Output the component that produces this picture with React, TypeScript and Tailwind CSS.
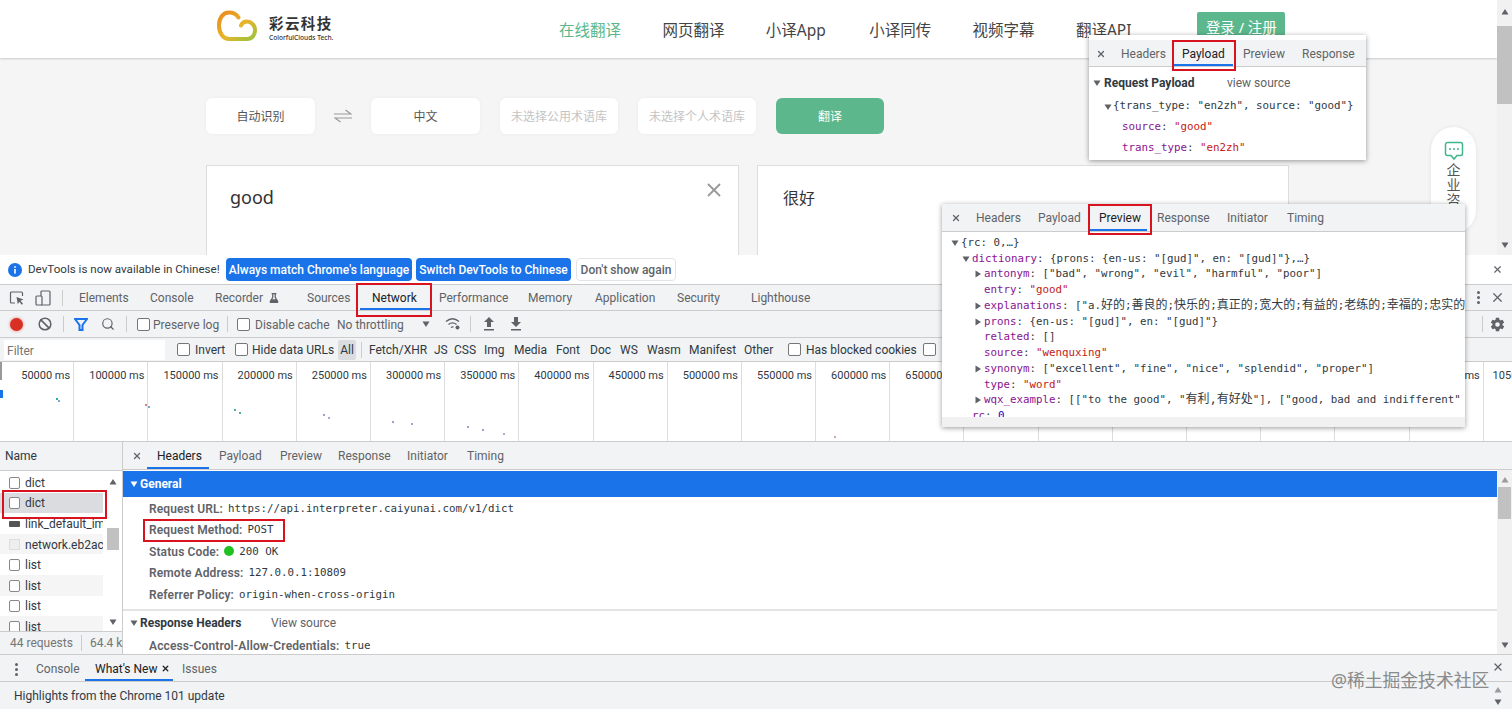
import { Ban, Search, X } from "lucide-react";
import { FaFlask } from "react-icons/fa";
import { IoSettingsSharp } from "react-icons/io5";

const cjk = "font-['Noto_Sans','Noto_Sans_CJK_SC',sans-serif]";
const ui = "font-['Roboto','Noto_Sans_CJK_SC',sans-serif]";
const mono = "font-['DejaVu_Sans_Mono','Noto_Sans_CJK_SC',monospace] text-[10.8px]";

const navItems = ["在线翻译", "网页翻译", "小译App", "小译同传", "视频字幕", "翻译API"];

const mainTabs = [
  { label: "Elements", w: "w-[71px]" },
  { label: "Console", w: "w-[65px]" },
  { label: "Recorder", w: "w-[92px]", flask: true },
  { label: "Sources", w: "w-[65px]" },
  { label: "Network", w: "w-[67px]", active: true },
  { label: "Performance", w: "w-[89px]" },
  { label: "Memory", w: "w-[67px]" },
  { label: "Application", w: "w-[82px]" },
  { label: "Security", w: "w-[74px]" },
  { label: "Lighthouse", w: "w-[80px]" },
];

const filterTypes = [
  { label: "Fetch/XHR", w: "w-[65px]" },
  { label: "JS", w: "w-[20px]" },
  { label: "CSS", w: "w-[30px]" },
  { label: "Img", w: "w-[30px]" },
  { label: "Media", w: "w-[42px]" },
  { label: "Font", w: "w-[34px]" },
  { label: "Doc", w: "w-[30px]" },
  { label: "WS", w: "w-[27px]" },
  { label: "Wasm", w: "w-[42px]" },
  { label: "Manifest", w: "w-[55px]" },
  { label: "Other", w: "w-[44px]" },
];

const ticks = [
  "50000 ms", "100000 ms", "150000 ms", "200000 ms", "250000 ms", "300000 ms", "350000 ms",
  "400000 ms", "450000 ms", "500000 ms", "550000 ms", "600000 ms", "650000 ms", "700000 ms",
  "750000 ms", "800000 ms", "850000 ms", "900000 ms", "950000 ms", "1000000 ms", "1050000 ms",
];

const dots = [
  [56, 398, "#3aa"], [58, 400, "#7ac"], [145, 404, "#c88"], [148, 406, "#7ac"], [234, 409, "#5aa"], [239, 412, "#5a9"],
  [323, 414, "#a9c"], [328, 417, "#aac"], [392, 421, "#a9c"], [411, 423, "#a9c"], [467, 426, "#a9c"], [482, 429, "#a9c"],
  [503, 433, "#bac"], [834, 436, "#caa"],
];

const requests = [
  { name: "dict" },
  { name: "dict", selected: true },
  { name: "link_default_im.", kind: "image" },
  { name: "network.eb2acc", kind: "file" },
  { name: "list" },
  { name: "list" },
  { name: "list" },
  { name: "list" },
];

const Checkbox = () => <span className="block w-[13px] h-[13px] shrink-0 border border-[#767676] rounded-[2px] bg-white" />;

const Sep = () => <span className="block w-px h-[16px] bg-[#ccc] shrink-0" />;

const Caret = ({ right = false, className = "" }: { right?: boolean; className?: string }) => (
  <svg width="8" height="8" viewBox="0 0 8 8" className={`shrink-0 ${className}`}>
    {right ? <path d="M1.5 0.5 7 4 1.5 7.5z" fill="#5f6368" /> : <path d="M0.5 1.5h7L4 7z" fill="#5f6368" />}
  </svg>
);

const RedBox = ({ className }: { className: string }) => <div className={`absolute border-2 border-[#d8121f] pointer-events-none ${className}`} />;

const Pill = ({ children }: { children: React.ReactNode }) => (
  <div className="w-[109px] h-[36px] rounded-[6px] bg-white flex items-center justify-center pt-[1px] text-[12px] text-[#555] shadow-[0_0_4px_rgba(0,0,0,0.04)]">{children}</div>
);

const Ghost = ({ children }: { children: React.ReactNode }) => (
  <div className="w-[118px] h-[36px] rounded-[6px] bg-white flex items-center justify-center pt-[1px] text-[12px] text-[#c4c4c4] shadow-[0_0_4px_rgba(0,0,0,0.04)]">{children}</div>
);

const Logo = () => (
  <svg width="44" height="34" viewBox="0 0 44 34" className="shrink-0">
    <defs>
      <linearGradient id="cloud" x1="0" y1="0" x2="1" y2="1">
        <stop offset="0" stopColor="#ea8a1e" />
        <stop offset="0.55" stopColor="#e6b52a" />
        <stop offset="1" stopColor="#9cc23c" />
      </linearGradient>
    </defs>
    <path
      d="M22.5 7.5C20 3.5 16.5 2.5 13 2.5 7 2.5 3 8 3 15.5 3 24 8 29 13 29H31C36 29 39 25 39 20.5 39 15 35 11.5 31 11.5 28 11.5 26 13 25 15.5"
      fill="none"
      stroke="url(#cloud)"
      strokeWidth="4"
      strokeLinecap="round"
    />
  </svg>
);

const DetailTabs = ({ items, active }: { items: { label: string; w: string }[]; active: string }) => (
  <>
    {items.map((t) => (
      <div key={t.label} className={`${t.w} h-full shrink-0 flex items-center relative text-[12px] ${t.label === active ? "text-[#202124]" : "text-[#5f6368]"}`}>
        {t.label}
        {t.label === active && <span className="absolute left-[-10px] right-[10px] bottom-0 h-[2px] bg-[#1a73e8]" />}
      </div>
    ))}
  </>
);

const Row = ({ label, children }: { label: string; children: React.ReactNode }) => (
  <div className="flex items-center h-[21.5px] pl-[26px] gap-[5px] whitespace-nowrap">
    <span className="text-[12px] font-semibold tracking-[0.12px] text-[#5f6368]">{label}</span>
    <span className={`${mono} text-[#303942]`}>{children}</span>
  </div>
);

const K = ({ children }: { children: React.ReactNode }) => <span className="text-[#881391]">{children}</span>;
const S = ({ children }: { children: React.ReactNode }) => <span className="text-[#c41a16]">{children}</span>;
const Zh = ({ children }: { children: React.ReactNode }) => <span className="text-[12px] leading-none">{children}</span>;

const Line = ({ pad, open, closed, children }: { pad: string; open?: boolean; closed?: boolean; children: React.ReactNode }) => (
  <div className={`flex items-center h-[15.75px] whitespace-nowrap ${pad}`}>
    <span className="w-[10px] shrink-0">{open ? <Caret /> : closed ? <Caret right /> : null}</span>
    <span>{children}</span>
  </div>
);

export default function App() {
  return (
    <div className={`relative w-[1512px] h-[709px] overflow-hidden bg-white ${ui}`}>
      {/* translated page */}
      <div className={`h-[255px] flex overflow-hidden bg-[#f5f5f5] ${cjk}`}>
        <div className="flex-1 min-w-0">
          <div className="h-[58px] bg-white shadow-[0_1px_2px_rgba(0,0,0,0.18)] flex pl-[216px]">
            <div className="flex items-start pt-[10px] gap-[7px] w-[343px]">
              <Logo />
              <div className="pl-[2px] pt-[4px]">
                <div className="text-[14.5px] leading-[18px] font-bold tracking-[1.4px] text-[#333]">彩云科技</div>
                <div className="text-[6.6px] leading-[10px] mt-[1px] font-medium text-[#333]">ColorfulClouds Tech.</div>
              </div>
            </div>
            {navItems.map((n, i) => (
              <div key={n} className={`w-[103.4px] h-full flex items-center pt-[3px] text-[15.5px] ${i === 0 ? "text-[#5cb88c]" : "text-[#444]"}`}>
                {n}
              </div>
            ))}
            <div className="ml-[18px] mt-[12px] w-[88px] h-[36px] rounded-[2px] bg-[#5cb88c] text-white text-[14.5px] text-center pt-[5px]">登录 / 注册</div>
          </div>
          <div className="pl-[206px] pt-[40px] flex items-center">
            <Pill>自动识别</Pill>
            <svg width="18" height="14" viewBox="0 0 18 14" className="mx-[19px] shrink-0" fill="none" stroke="#999" strokeWidth="1.2">
              <path d="M0 5H17L11.5 1" />
              <path d="M18 9H1L6.5 13" />
            </svg>
            <Pill>中文</Pill>
            <div className="ml-[20px] flex gap-[20px]">
              <Ghost>未选择公用术语库</Ghost>
              <Ghost>未选择个人术语库</Ghost>
              <div className="w-[108px] h-[36px] rounded-[6px] bg-[#5cb88c] text-white text-[12px] flex items-center justify-center pt-[1px]">翻译</div>
            </div>
          </div>
          <div className="pl-[206px] pt-[31px] flex gap-[18px]">
            <div className="relative w-[533px] h-[200px] bg-white border border-[#ddd] pl-[23px] pt-[18px] text-[18px] text-[#333]">
              good
              <X className="absolute right-[13px] top-[13px] text-[#999]" size={22} strokeWidth={2} />
            </div>
            <div className="w-[532px] h-[200px] bg-white border border-[#ddd] pl-[25px] pt-[20px] text-[16px] text-[#333]">很好</div>
          </div>
        </div>
        <div className="w-[15px] shrink-0 bg-[#f1f1f1] flex flex-col items-center relative">
          <Caret className="mt-[8px] rotate-180" />
          <div className="w-full h-[78px] mt-[10px] bg-[#c1c1c1]" />
          <Caret className="mt-auto mb-[6px]" />
        </div>
      </div>

      {/* floating consult pill */}
      <div className={`absolute left-[1431px] top-[127px] w-[45px] h-[106px] rounded-[23px] bg-white shadow-[0_0_4px_rgba(0,0,0,0.08)] overflow-hidden flex flex-col items-center pt-[14px] text-[14px] leading-[15px] text-[#555] ${cjk}`}>
        <svg width="20" height="20" viewBox="0 0 20 20" fill="none" stroke="#3fb58a" strokeWidth="1.5" className="mb-[1px] shrink-0">
          <path d="M3.5 1.5h13a2 2 0 0 1 2 2v9a2 2 0 0 1-2 2h-3.5L10 18l-3-3.5H3.5a2 2 0 0 1-2-2v-9a2 2 0 0 1 2-2z" />
          <circle cx="6" cy="8" r="1" fill="#3fb58a" stroke="none" />
          <circle cx="10" cy="8" r="1" fill="#3fb58a" stroke="none" />
          <circle cx="14" cy="8" r="1" fill="#3fb58a" stroke="none" />
        </svg>
        <span>企</span>
        <span>业</span>
        <span>咨</span>
      </div>

      {/* devtools */}
      <div className="h-[30px] flex items-center pl-[8px] border-b border-[#ccc] bg-white text-[12px] relative whitespace-nowrap">
        <svg width="14" height="14" viewBox="0 0 14 14" className="shrink-0 mr-[6px]">
          <circle cx="7" cy="7" r="7" fill="#1a73e8" />
          <rect x="6.2" y="6" width="1.6" height="4.6" fill="#fff" />
          <rect x="6.2" y="3.2" width="1.6" height="1.6" fill="#fff" />
        </svg>
        <span className="text-[#303942] text-[11.6px] w-[198px]">DevTools is now available in Chinese!</span>
        <div className="w-[186px] h-[23px] rounded-[4px] bg-[#1a73e8] text-white font-medium flex items-center justify-center">Always match Chrome's language</div>
        <div className="ml-[4px] w-[155px] h-[23px] rounded-[4px] bg-[#1a73e8] text-white font-medium flex items-center justify-center">Switch DevTools to Chinese</div>
        <div className="ml-[5px] w-[100px] h-[23px] rounded-[4px] bg-white border border-[#e4e4e4] text-[#5f6368] font-medium flex items-center justify-center">Don't show again</div>
        <X className="ml-auto mr-[9px] text-[#5f6368]" size={11} strokeWidth={2.5} />
      </div>

      <div className="h-[26px] flex items-center bg-[#f1f3f4] border-b border-[#ccc] text-[12px] text-[#5f6368]">
        <svg width="16" height="16" viewBox="0 0 16 16" fill="none" stroke="#5f6368" strokeWidth="1.2" className="ml-[9px] shrink-0">
          <path d="M6 13H2.5a1 1 0 0 1-1-1V3a1 1 0 0 1 1-1h10a1 1 0 0 1 1 1v3" />
          <path d="M7.5 7l7 2.5-3 1.2 2.5 3-1.2 1-2.5-3-1.5 2.5z" fill="#5f6368" stroke="none" />
        </svg>
        <svg width="16" height="16" viewBox="0 0 16 16" fill="none" stroke="#5f6368" strokeWidth="1.2" className="ml-[10px] shrink-0">
          <rect x="6" y="1" width="9" height="14" rx="1" />
          <rect x="1" y="6" width="6" height="9" rx="1" fill="#f1f3f4" />
        </svg>
        <span className="ml-[11px] mr-[16px]"><Sep /></span>
        {mainTabs.map((t) => (
          <div key={t.label} className={`${t.w} h-full shrink-0 flex items-center pt-[1px] gap-[6px] relative ${t.active ? "text-[#202124]" : ""}`}>
            {t.label}
            {t.flask && <FaFlask size={10} className="text-[#5f6368]" />}
            {t.active && <span className="absolute left-[-12px] right-[8px] bottom-0 h-[2px] bg-[#1a73e8]" />}
          </div>
        ))}
        <div className="ml-auto flex items-center">
          <span className="flex flex-col gap-[2px] mr-[10px]">
            <i className="w-[3px] h-[3px] rounded-full bg-[#5f6368]" />
            <i className="w-[3px] h-[3px] rounded-full bg-[#5f6368]" />
            <i className="w-[3px] h-[3px] rounded-full bg-[#5f6368]" />
          </span>
          <X className="mr-[7px] text-[#5f6368]" size={15} strokeWidth={2} />
        </div>
      </div>

      <div className="h-[27px] flex items-center bg-[#f1f3f4] border-b border-[#ccc] text-[12px] text-[#5f6368] whitespace-nowrap">
        <span className="ml-[10px] w-[13px] h-[13px] rounded-full bg-[#d93025] shadow-[0_0_3px_rgba(217,48,37,0.6)]" />
        <Ban className="ml-[15px] text-[#5f6368]" size={14} strokeWidth={2.6} />
        <span className="ml-[11px]"><Sep /></span>
        <svg width="14" height="13" viewBox="0 0 14 13" className="ml-[10px] shrink-0">
          <path d="M1 1h12L8.5 7v5h-3V7z" fill="none" stroke="#1a73e8" strokeWidth="2" />
        </svg>
        <Search className="ml-[13px] text-[#5f6368]" size={14} strokeWidth={2} />
        <span className="ml-[11px]"><Sep /></span>
        <span className="ml-[10px]"><Checkbox /></span>
        <span className="ml-[3px] w-[74px] pt-[1px]">Preserve log</span>
        <Sep />
        <span className="ml-[9px]"><Checkbox /></span>
        <span className="ml-[5px] w-[82px] pt-[1px]">Disable cache</span>
        <span className="w-[85px] pt-[1px]">No throttling</span>
        <Caret />
        <svg width="16" height="14" viewBox="0 0 16 14" fill="none" stroke="#5f6368" strokeWidth="1.4" className="ml-[15px] shrink-0">
          <path d="M1 4.5c4-3.5 9-3.5 13 0M3.5 7.5c2.5-2 5.500-2 8 0M6 10.500c.8-.6 1.600-.7 2.400-.5" />
          <circle cx="12.500" cy="10.500" r="2" fill="#5f6368" stroke="none" />
        </svg>
        <span className="ml-[9px]"><Sep /></span>
        <svg width="12" height="14" viewBox="0 0 12 14" className="ml-[12px] shrink-0" fill="#5f6368">
          <path d="M6 0l5 5H8v5H4V5H1zM1 12h10v1.500H1z" />
        </svg>
        <svg width="12" height="14" viewBox="0 0 12 14" className="ml-[15px] shrink-0" fill="#5f6368">
          <path d="M6 10L1 5h3V0h4v5h3zM1 12h10v1.500H1z" />
        </svg>
        <div className="ml-auto flex items-center">
          <Sep />
          <IoSettingsSharp size={15} className="ml-[7px] mr-[7px] text-[#5f6368]" />
        </div>
      </div>

      <div className="h-[24px] flex items-center bg-[#f1f3f4] border-b border-[#ccc] text-[12px] text-[#303942] whitespace-nowrap">
        <div className="ml-[4px] w-[161px] h-[20px] bg-white text-[#757575] pl-[3px] pt-[2px] flex items-center">Filter</div>
        <span className="ml-[12px]"><Checkbox /></span>
        <span className="ml-[5px] w-[40px] pt-[1px]">Invert</span>
        <Checkbox />
        <span className="ml-[4px] w-[86px] pt-[1px]">Hide data URLs</span>
        <div className="w-[18px] h-[20px] rounded-[2px] bg-[#dadce0] flex items-center justify-center pt-[1px]">All</div>
        <span className="ml-[5px] mr-[7px] w-px h-[16px] bg-[#ccc]" />
        {filterTypes.map((f) => (
          <span key={f.label} className={`${f.w} shrink-0 pt-[1px]`}>{f.label}</span>
        ))}
        <Checkbox />
        <span className="ml-[5px] w-[117px] pt-[1px]">Has blocked cookies</span>
        <Checkbox />
      </div>

      <div className="relative h-[80px] flex bg-white border-b border-[#ccc] text-[11px] text-[#303942] overflow-hidden">
        {ticks.map((t) => (
          <div key={t} className="w-[74.2px] h-full shrink-0 border-r border-[#ddd] text-right pr-[3px] pt-[6px] whitespace-nowrap">{t}</div>
        ))}
        <svg width="1512" height="80" className="absolute left-0 top-0">
          <rect x="0" y="0" width="2" height="18" fill="#999" />
          <rect x="0" y="28" width="3" height="8" fill="#1a73e8" />
          {dots.map(([x, y, c], i) => (
            <rect key={i} x={(x as number)} y={(y as number) - 362} width="2" height="2" fill={c as string} />
          ))}
        </svg>
      </div>

      <div className="h-[213px] flex border-b border-[#ccc] overflow-hidden">
        <div className="w-[123px] shrink-0 border-r border-[#ccc] flex flex-col bg-white text-[12px] text-[#303942]">
          <div className="h-[29px] shrink-0 bg-[#f1f3f4] border-b border-[#ccc] flex items-center pl-[5px]">Name</div>
          <div className="relative h-[160px] shrink-0 overflow-hidden pt-[1px]">
            {requests.map((r, i) => (
              <div key={i} className={`h-[20.6px] flex items-center pl-[8px] gap-[4px] pt-[1px] whitespace-nowrap overflow-hidden w-[103px] ${r.selected ? "bg-[#dadce0]" : i % 2 === 1 ? "bg-[#f5f5f5]" : ""}`}>
                {r.kind === "image" ? (
                  <span className="w-[11px] h-[6px] mx-px shrink-0 bg-[#555] rounded-[1px]" />
                ) : r.kind === "file" ? (
                  <span className="w-[11px] h-[11px] mx-px shrink-0 bg-[#eee] border border-[#ddd]" />
                ) : (
                  <span className="w-[11px] h-[12px] mx-px shrink-0 border border-[#888] rounded-[2px] bg-white" />
                )}
                <span>{r.name}</span>
              </div>
            ))}
            <div className="absolute right-0 top-0 w-[18px] h-full bg-white flex flex-col items-center">
              <Caret className="mt-[7px] rotate-180" />
              <div className="w-[12px] h-[22px] mt-[42px] bg-[#c1c1c1]" />
              <Caret className="mt-auto mb-[5px]" />
            </div>
          </div>
          <div className="flex-1 bg-[#f1f3f4] border-t border-[#ccc] flex items-center pl-[10px] text-[#757575] whitespace-nowrap">
            44 requests
            <span className="mx-[8px]"><Sep /></span>
            64.4 k
          </div>
        </div>
        <div className="flex-1 min-w-0 flex flex-col">
          <div className="h-[28px] shrink-0 flex items-center bg-[#f1f3f4] border-b border-[#ccc]">
            <X className="ml-[9px] mr-[15px] text-[#5f6368]" size={10} strokeWidth={3} />
            <DetailTabs
              active="Headers"
              items={[
                { label: "Headers", w: "w-[62px]" },
                { label: "Payload", w: "w-[61px]" },
                { label: "Preview", w: "w-[58px]" },
                { label: "Response", w: "w-[69px]" },
                { label: "Initiator", w: "w-[60px]" },
                { label: "Timing", w: "w-[50px]" },
              ]}
            />
          </div>
          <div className="flex-1 min-h-0 flex">
            <div className="flex-1 min-w-0 bg-white overflow-hidden">
              <div className="h-[26px] bg-[#1a73e8] mt-px text-white text-[12px] font-bold flex items-center pl-[7px] gap-[2px]">
                <Caret className="[&>path]:fill-white" />
                General
              </div>
              <div className="pt-[1px] pb-[3px] border-b-2 border-[#e4e4e4]">
                <Row label="Request URL:">https://api.interpreter.caiyunai.com/v1/dict</Row>
                <Row label="Request Method:">POST</Row>
                <Row label="Status Code:">
                  <span className="inline-block w-[10px] h-[10px] rounded-full bg-[#20c020] mr-[5px] align-[-1px]" />
                  200 OK
                </Row>
                <Row label="Remote Address:">127.0.0.1:10809</Row>
                <Row label="Referrer Policy:">origin-when-cross-origin</Row>
              </div>
              <div className="h-[25px] flex items-center pl-[7px] gap-[2px] text-[12px] whitespace-nowrap">
                <Caret />
                <span className="font-bold text-[#303942] w-[129px]">Response Headers</span>
                <span className="text-[#5f6368]">View source</span>
              </div>
              <Row label="Access-Control-Allow-Credentials:">true</Row>
            </div>
            <div className="w-[15px] shrink-0 bg-[#f1f1f1] flex flex-col items-center">
              <Caret className="mt-[6px] rotate-180 opacity-60" />
              <div className="w-[13px] h-[32px] mt-[3px] bg-[#c1c1c1]" />
              <Caret className="mt-auto mb-[5px]" />
            </div>
          </div>
        </div>
      </div>

      <div className="h-[27px] flex items-center bg-[#f1f3f4] border-b border-[#ccc] pt-[2px] text-[12px] text-[#5f6368]">
        <span className="ml-[15px] mr-[18px] flex flex-col gap-[2px]">
          <i className="w-[3px] h-[3px] rounded-full bg-[#5f6368]" />
          <i className="w-[3px] h-[3px] rounded-full bg-[#5f6368]" />
          <i className="w-[3px] h-[3px] rounded-full bg-[#5f6368]" />
        </span>
        <span className="w-[59px]">Console</span>
        <div className="relative w-[87px] h-full flex items-center text-[#202124]">
          What's New
          <X className="absolute left-[66px] top-[7px]" size={9} strokeWidth={3.5} />
          <span className="absolute left-[-10px] right-[9px] bottom-0 h-[2px] bg-[#1a73e8]" />
        </div>
        <span>Issues</span>
        <X className="ml-auto mr-[8px] mb-[4px] text-[#5f6368]" size={12} strokeWidth={2.5} />
      </div>

      <div className="h-[27px] flex items-center bg-[#f1f3f4] pl-[14px] text-[12px] text-[#303942]">
        Highlights from the Chrome 101 update
        <div className="ml-auto mr-[10px] flex flex-col gap-[4px]">
          <Caret className="rotate-180 opacity-60" />
          <Caret />
        </div>
      </div>

      {/* payload popup */}
      <div className="absolute left-[1089px] top-[35px] w-[277px] h-[125px] bg-white shadow-[0_1px_5px_rgba(0,0,0,0.4)] pt-[5px] text-[12px]">
        <div className="h-[27px] flex items-center pt-[1px] bg-[#f1f3f4] border-b border-[#ccc]">
          <X className="ml-[7px] mr-[15px] text-[#5f6368]" size={10} strokeWidth={3} />
          <DetailTabs
            active="Payload"
            items={[
              { label: "Headers", w: "w-[61px]" },
              { label: "Payload", w: "w-[61px]" },
              { label: "Preview", w: "w-[59px]" },
              { label: "Response", w: "w-[60px]" },
            ]}
          />
        </div>
        <div className="flex items-center pl-[4px] pt-[7px] gap-[3px]">
          <Caret />
          <span className="font-bold text-[#303942] w-[120px]">Request Payload</span>
          <span className="text-[#5f6368]">view source</span>
        </div>
        <div className={`${mono} text-[#303942] pt-[4px]`}>
          <div className="flex items-center h-[21px] pl-[15px] gap-[1px] whitespace-nowrap">
            <Caret />
            {'{trans_type: "en2zh", source: "good"}'}
          </div>
          <div className="h-[20.5px] pl-[33px] flex items-center"><K>source</K>:&nbsp;<S>"good"</S></div>
          <div className="h-[20.5px] pl-[33px] flex items-center"><K>trans_type</K>:&nbsp;<S>"en2zh"</S></div>
        </div>
      </div>

      {/* preview popup */}
      <div className="absolute left-[942px] top-[204px] w-[523px] h-[223px] bg-white shadow-[0_1px_5px_rgba(0,0,0,0.4)] overflow-hidden text-[12px]">
        <div className="h-[28px] flex items-center bg-[#f1f3f4] border-b border-[#ccc]">
          <X className="ml-[9px] mr-[15px] text-[#5f6368]" size={10} strokeWidth={3} />
          <DetailTabs
            active="Preview"
            items={[
              { label: "Headers", w: "w-[62px]" },
              { label: "Payload", w: "w-[61px]" },
              { label: "Preview", w: "w-[58px]" },
              { label: "Response", w: "w-[70px]" },
              { label: "Initiator", w: "w-[60px]" },
              { label: "Timing", w: "w-[50px]" },
            ]}
          />
        </div>
        <div className={`${mono} text-[#303942] pt-[3px] overflow-hidden h-[185px]`}>
          <Line pad="pl-[9px]" open>{"{rc: 0,…}"}</Line>
          <Line pad="pl-[20px]" open><K>dictionary</K>: {'{prons: {en-us: "[gud]", en: "[gud]"},…}'}</Line>
          <Line pad="pl-[32px]" closed><K>antonym</K>: {'["bad", "wrong", "evil", "harmful", "poor"]'}</Line>
          <Line pad="pl-[32px]"><K>entry</K>: <S>"good"</S></Line>
          <Line pad="pl-[32px]" closed><K>explanations</K>: {'["a.'}<Zh>好的</Zh>;<Zh>善良的</Zh>;<Zh>快乐的</Zh>;<Zh>真正的</Zh>;<Zh>宽大的</Zh>;<Zh>有益的</Zh>;<Zh>老练的</Zh>;<Zh>幸福的</Zh>;<Zh>忠实的</Zh></Line>
          <Line pad="pl-[32px]" closed><K>prons</K>: {'{en-us: "[gud]", en: "[gud]"}'}</Line>
          <Line pad="pl-[32px]"><K>related</K>: []</Line>
          <Line pad="pl-[32px]"><K>source</K>: <S>"wenquxing"</S></Line>
          <Line pad="pl-[32px]" closed><K>synonym</K>: {'["excellent", "fine", "nice", "splendid", "proper"]'}</Line>
          <Line pad="pl-[32px]"><K>type</K>: <S>"word"</S></Line>
          <Line pad="pl-[32px]" closed><K>wqx_example</K>: {'[["to the good", "'}<Zh>有利,有好处</Zh>{'"], ["good, bad and indifferent"'}</Line>
          <Line pad="pl-[20px]"><K>rc</K>: <span className="text-[#1c00cf]">0</span></Line>
        </div>
        <div className="h-[10px] bg-[#f1f1f1]" />
      </div>

      {/* annotations */}
      <RedBox className="left-[356px] top-[283px] w-[76px] h-[34px]" />
      <RedBox className="left-[1172px] top-[40px] w-[64px] h-[31px]" />
      <RedBox className="left-[1088px] top-[204px] w-[64px] h-[31px]" />
      <RedBox className="left-[2px] top-[490px] w-[105px] h-[29px]" />
      <RedBox className="left-[143px] top-[519px] w-[142px] h-[23px]" />

      <div className={`absolute left-[1331px] top-[668px] text-[17.8px] leading-[24px] text-[#8a8a8a] whitespace-nowrap ${cjk}`}>@稀土掘金技术社区</div>
    </div>
  );
}
